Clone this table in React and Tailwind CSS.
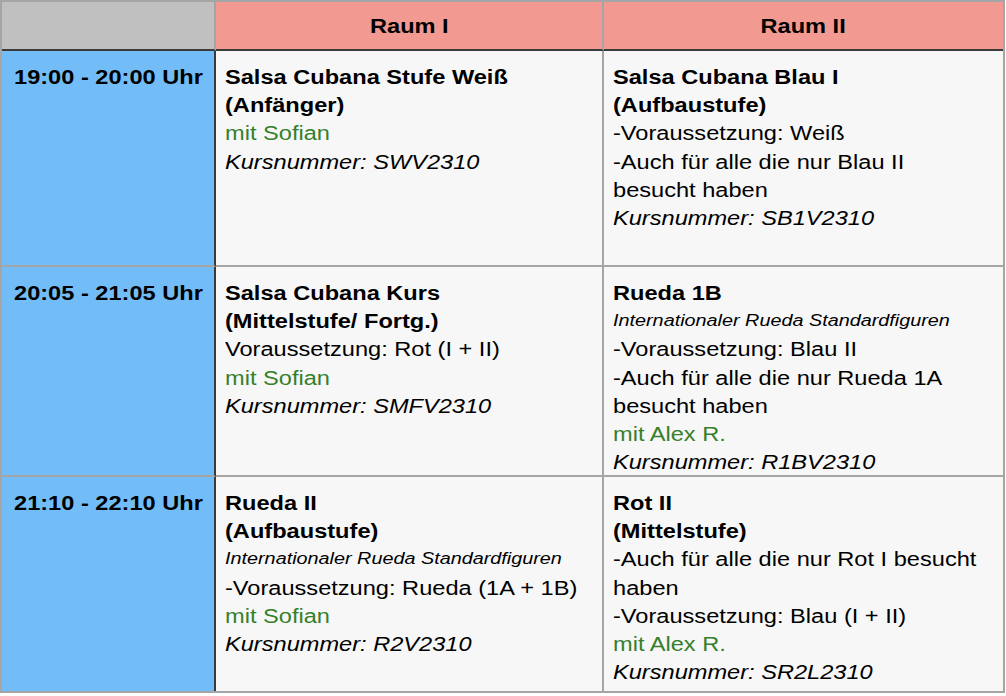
import React from "react";

const G = ({ children }) => <div className="text-[#35802a]">{children}</div>;
const K = ({ children }) => <div className="italic">{children}</div>;
const B = ({ children }) => <div className="font-bold">{children}</div>;
const S = ({ children }) => <div className="italic text-[16.8px]">{children}</div>;
const T = ({ children }) => <div>{children}</div>;

function TimeCell({ children, last }) {
  return (
    <div
      className={`bg-[#72bdf7] border-r-2 border-r-[#3a3a3a] ${last ? "" : "border-b-2 border-b-[#a5a5a5]"} pl-[12px] pt-[12px] font-bold whitespace-nowrap overflow-hidden`}
    >
      <div className="w-fit origin-left scale-x-[1.18]">{children}</div>
    </div>
  );
}

function Cell({ children, lastCol, last }) {
  return (
    <div
      className={`bg-[#f7f7f7] ${lastCol ? "" : "border-r-2 border-r-[#a5a5a5]"} ${last ? "" : "border-b-2 border-b-[#a5a5a5]"} pl-[9px] pt-[12px] whitespace-nowrap overflow-hidden`}
    >
      <div className="w-fit origin-left scale-x-[1.18]">{children}</div>
    </div>
  );
}

export default function App() {
  return (
    <div
      className="w-[1005px] h-[693px] bg-white text-black text-[20px] leading-[28.2px]"
      style={{ fontFamily: '"Liberation Sans", Arial, Helvetica, sans-serif' }}
    >
      <div className="border-2 border-[#a5a5a5] grid grid-cols-[214px_388px_1fr] grid-rows-[49px_216px_210px_1fr] h-[693px]">
        <div className="bg-[#c0c0c0] border-r-2 border-r-[#a5a5a5] border-b-2 border-b-[#3a3a3a]" />
        <div className="bg-[#f29a91] border-r-2 border-r-[#a5a5a5] border-b-2 border-b-[#3a3a3a] flex items-center justify-center font-bold pt-[2px]">
          <span className="scale-x-[1.18]">Raum I</span>
        </div>
        <div className="bg-[#f29a91] border-b-2 border-b-[#3a3a3a] flex items-center justify-center font-bold pt-[2px]">
          <span className="scale-x-[1.18]">Raum II</span>
        </div>

        <TimeCell>19:00 - 20:00 Uhr</TimeCell>
        <Cell>
          <B>Salsa Cubana Stufe Weiß</B>
          <B>(Anfänger)</B>
          <G>mit Sofian</G>
          <K>Kursnummer: SWV2310</K>
        </Cell>
        <Cell lastCol>
          <B>Salsa Cubana Blau I</B>
          <B>(Aufbaustufe)</B>
          <T>-Voraussetzung: Weiß</T>
          <T>-Auch für alle die nur Blau II</T>
          <T>besucht haben</T>
          <K>Kursnummer: SB1V2310</K>
        </Cell>

        <TimeCell>20:05 - 21:05 Uhr</TimeCell>
        <Cell>
          <B>Salsa Cubana Kurs</B>
          <B>(Mittelstufe/ Fortg.)</B>
          <T>Voraussetzung: Rot (I + II)</T>
          <G>mit Sofian</G>
          <K>Kursnummer: SMFV2310</K>
        </Cell>
        <Cell lastCol>
          <B>Rueda 1B</B>
          <S>Internationaler Rueda Standardfiguren</S>
          <T>-Voraussetzung: Blau II</T>
          <T>-Auch für alle die nur Rueda 1A</T>
          <T>besucht haben</T>
          <G>mit Alex R.</G>
          <K>Kursnummer: R1BV2310</K>
        </Cell>

        <TimeCell last>21:10 - 22:10 Uhr</TimeCell>
        <Cell last>
          <B>Rueda II</B>
          <B>(Aufbaustufe)</B>
          <S>Internationaler Rueda Standardfiguren</S>
          <T>-Voraussetzung: Rueda (1A + 1B)</T>
          <G>mit Sofian</G>
          <K>Kursnummer: R2V2310</K>
        </Cell>
        <Cell last lastCol>
          <B>Rot II</B>
          <B>(Mittelstufe)</B>
          <T>-Auch für alle die nur Rot I besucht</T>
          <T>haben</T>
          <T>-Voraussetzung: Blau (I + II)</T>
          <G>mit Alex R.</G>
          <K>Kursnummer: SR2L2310</K>
        </Cell>
      </div>
    </div>
  );
}
